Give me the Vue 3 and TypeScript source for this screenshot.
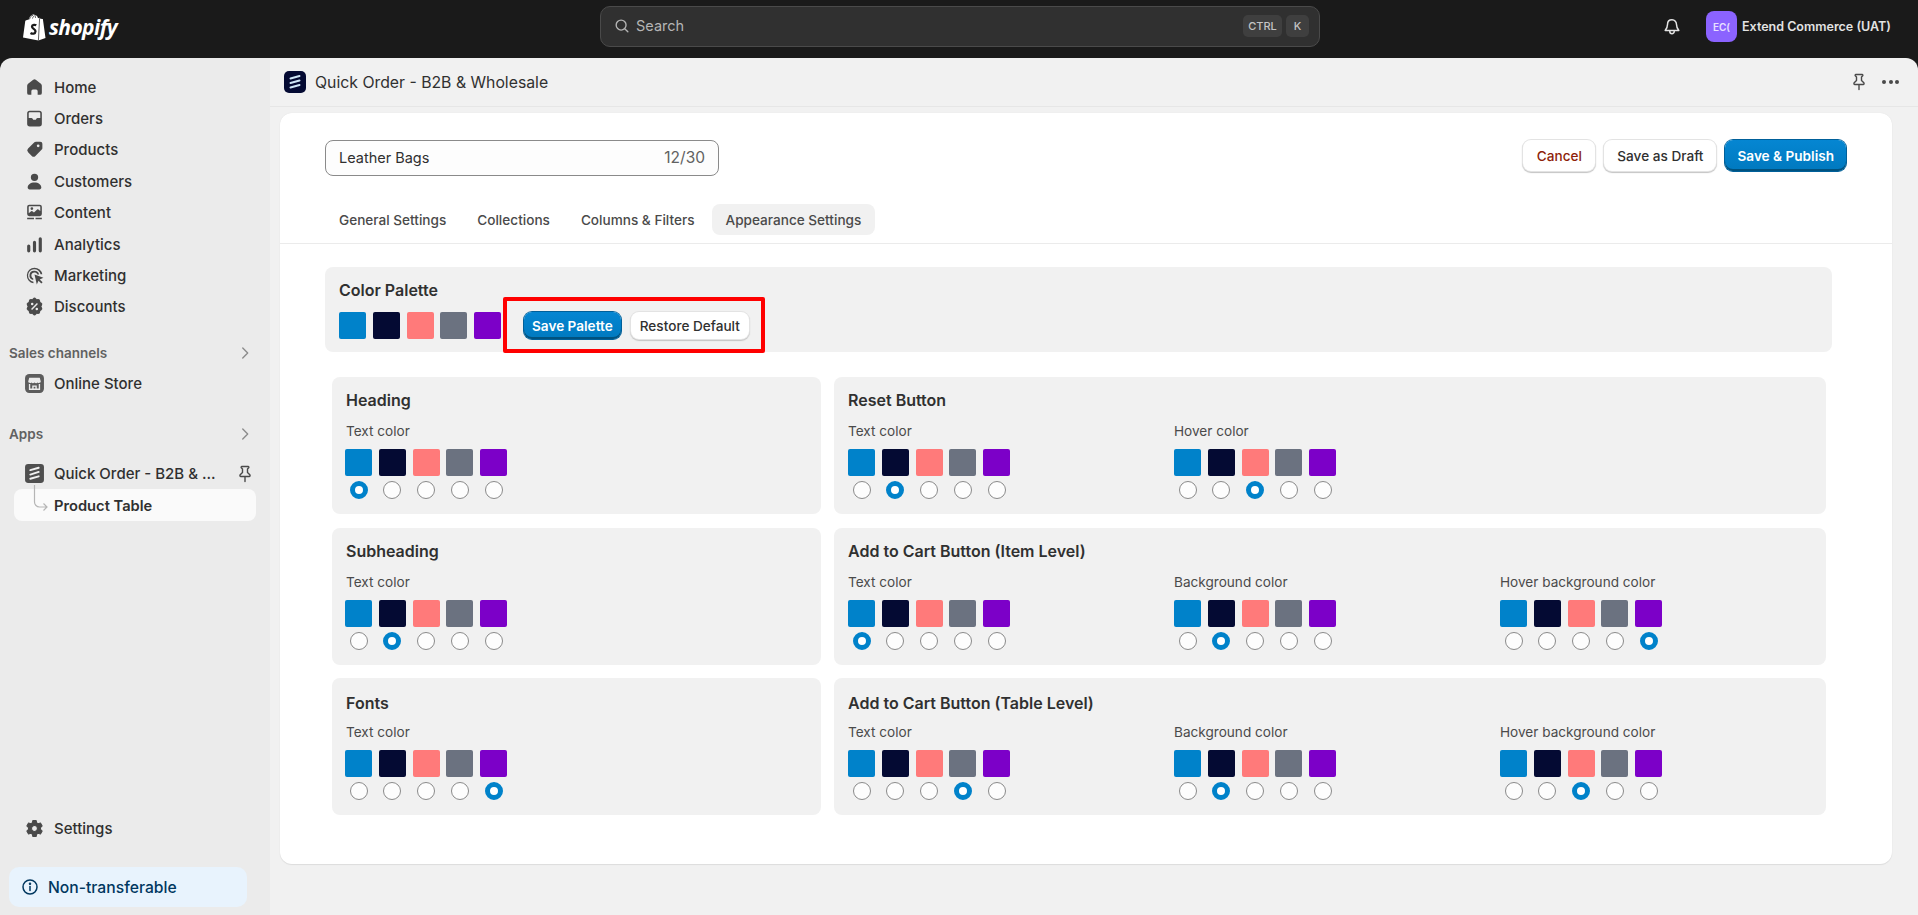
<script setup lang="ts">
interface NavItem { label: string; d: string }
interface Col { label: string; sel: number }
interface Section { title: string; cols: Col[] }

const colors = ['#0082ca', '#040a33', '#ff7a7a', '#6b7280', '#7c00c8']

const nav: NavItem[] = [
  { label: 'Home', d: 'M8.8 2.7a2 2 0 0 1 2.4 0l4.9 3.7A2.4 2.4 0 0 1 17 8.3v6.900a1.800 1.800 0 0 1-1.800 1.800H13v-3.500a1.500 1.500 0 0 0-1.500-1.500h-3A1.500 1.500 0 0 0 7 13.500V17H4.800A1.800 1.800 0 0 1 3 15.200V8.300a2.400 2.400 0 0 1 .9-1.900z' },
  { label: 'Orders', d: 'M5.500 2.500A2.500 2.500 0 0 0 3 5v10a2.500 2.500 0 0 0 2.500 2.500h9A2.500 2.500 0 0 0 17 15V5a2.500 2.500 0 0 0-2.500-2.500zM4.500 5a1 1 0 0 1 1-1h9a1 1 0 0 1 1 1v4.500h-2.600c-.5 0-.9.300-1.100.700l-.3.600c-.1.300-.4.500-.7.500H9.200c-.3 0-.6-.2-.7-.5l-.3-.6c-.2-.4-.6-.7-1.100-.7H4.500z' },
  { label: 'Products', d: 'M11.300 2.500h4.200a2 2 0 0 1 2 2v4.200a2 2 0 0 1-.6 1.400l-6 6a2.500 2.500 0 0 1-3.500 0l-3.500-3.500a2.500 2.500 0 0 1 0-3.500l6-6a2 2 0 0 1 1.400-.6zM13.500 5.200a1.300 1.300 0 1 0 0 2.600 1.300 1.300 0 0 0 0-2.600z' },
  { label: 'Customers', d: 'M10 2.500a3.500 3.500 0 1 1 0 7 3.500 3.500 0 0 1 0-7zM10 11c-3.800 0-6.500 2-6.500 4.700 0 1 .8 1.800 1.800 1.800h9.400c1 0 1.800-.8 1.800-1.800C16.500 13 13.800 11 10 11z' },
  { label: 'Content', d: 'M5 2.500A2 2 0 0 0 3 4.500v7a2 2 0 0 0 2 2h10a2 2 0 0 0 2-2v-7a2 2 0 0 0-2-2zM4.500 4.500A.5.5 0 0 1 5 4h10a.5.5 0 0 1 .5.5v4l-1.800-1.400a1 1 0 0 0-1.200 0L9.500 10 8 8.900a1 1 0 0 0-1.200 0l-2.300 1.800zM7.500 5a1.300 1.300 0 1 0 0 2.600 1.300 1.300 0 0 0 0-2.600zM3 15h6.500v1.500H3zM11 15h6v1.500h-6z' },
  { label: 'Analytics', d: 'M3 11.500a1.500 1.500 0 0 1 3 0V16a1.500 1.500 0 0 1-3 0zM8.500 8a1.500 1.500 0 0 1 3 0v8a1.500 1.500 0 0 1-3 0zM14 4.500a1.500 1.500 0 0 1 3 0V16a1.500 1.500 0 0 1-3 0z' },
  { label: 'Marketing', d: 'M10 2.500a7.500 7.500 0 0 1 7.400 6.300h-1.600A6 6 0 1 0 9 15.900v1.500A7.500 7.500 0 0 1 10 2.500zM10 5.500a4.500 4.500 0 0 1 4.400 3.500h-1.600A3 3 0 1 0 8.800 12.800v1.600A4.500 4.500 0 0 1 10 5.500zM10 9l8.500 3.200-3.500 1.600 2.700 2.700-1.200 1.200-2.700-2.700-1.600 3.500z' },
  { label: 'Discounts', d: 'M8.500 2.300a2 2 0 0 1 3 0l.7.700 1-.1a2 2 0 0 1 2.200 1.800l.1 1 .9.600a2 2 0 0 1 .6 2.900l-.5.800.5.800a2 2 0 0 1-.6 2.900l-.9.600-.1 1a2 2 0 0 1-2.200 1.800l-1-.1-.7.700a2 2 0 0 1-3 0l-.7-.7-1 .1a2 2 0 0 1-2.200-1.800l-.1-1-.9-.6a2 2 0 0 1-.6-2.900l.5-.8-.5-.8a2 2 0 0 1 .6-2.900l.9-.6.100-1a2 2 0 0 1 2.200-1.800l1 .1zM12.300 6.700 6.700 12.300l1 1 5.600-5.600zM7.800 6.400a1.200 1.200 0 1 0 0 2.400 1.200 1.200 0 0 0 0-2.400zM12.200 11.200a1.200 1.200 0 1 0 0 2.400 1.200 1.200 0 0 0 0-2.400z' }
]

const gearPath = 'M8.400 2.500h3.200l.5 2.100 1.500.9 2.100-.7 1.600 2.800-1.600 1.500v1.800l1.600 1.500-1.600 2.800-2.100-.7-1.500.9-.5 2.100H8.400l-.5-2.100-1.500-.9-2.100.7-1.600-2.800 1.600-1.500V9.100L2.700 7.600l1.600-2.800 2.100.7 1.500-.9zM10 7.200a2.800 2.800 0 1 0 0 5.600 2.800 2.800 0 0 0 0-5.600z'

const pinPath = 'M6.800 2.500h6.400c.6 0 .9.700.5 1.200L12.500 5v3.500l2.300 2.300c.6.600.2 1.700-.7 1.700H5.900c-.9 0-1.300-1.100-.7-1.700l2.300-2.300V5L6.300 3.700c-.4-.5-.1-1.200.5-1.200zM10 12.500v5'

const sections: Section[] = [
  { title: 'Heading', cols: [{ label: 'Text color', sel: 0 }] },
  { title: 'Reset Button', cols: [{ label: 'Text color', sel: 1 }, { label: 'Hover color', sel: 2 }] },
  { title: 'Subheading', cols: [{ label: 'Text color', sel: 1 }] },
  { title: 'Add to Cart Button (Item Level)', cols: [{ label: 'Text color', sel: 0 }, { label: 'Background color', sel: 1 }, { label: 'Hover background color', sel: 4 }] },
  { title: 'Fonts', cols: [{ label: 'Text color', sel: 4 }] },
  { title: 'Add to Cart Button (Table Level)', cols: [{ label: 'Text color', sel: 3 }, { label: 'Background color', sel: 1 }, { label: 'Hover background color', sel: 2 }] }
]
</script>

<template>
  <div class="app">
    <header class="topbar">
      <div class="brand">
        <svg class="bag" viewBox="0 0 24 27" width="24" height="27">
          <path fill="#fff" d="M1 23.500 3.300 6.800c.1-.5 3.100-1.200 3.500-1.300C7.400 3 9.300.5 11.700.5c.6 0 1.100.3 1.500.8 1.500 0 2.400 1.300 2.800 2.900l1.600-.5.900 1 2.100.2c.2 0 .3.1.3.3L23.500 24 16.400 26.500z" />
          <path fill="none" stroke="#1a1a1a" stroke-width=".7" d="M17.600 4.200 16.400 26.500M7.500 5.300c.4-2 1.800-4 3.600-4M10.500 4.500c.3-1.300 1-2.400 2-2.700M13.500 3.900c0-1-.1-1.700-.4-2.300" />
          <path fill="none" stroke="#1a1a1a" stroke-width="2.300" d="M14.300 11.300c-1.100-.6-4-.9-4.300 1.200-.3 2.300 3.700 2.500 3.500 5-.2 2.300-2.900 2.600-5 1.400" />
        </svg>
        <span class="wordmark">shopify</span>
      </div>
      <div class="search">
        <svg viewBox="0 0 20 20" width="18" height="18" fill="none" stroke="#b5b5b5" stroke-width="1.500"><circle cx="9" cy="9" r="5.500" /><path d="m13 13 3.500 3.500" stroke-linecap="round" /></svg>
        <span class="search-text">Search</span>
        <span class="kbd ctrl">CTRL</span>
        <span class="kbd">K</span>
      </div>
      <div class="top-right">
        <svg class="bell" viewBox="0 0 20 20" width="20" height="20" fill="none" stroke="#e3e3e3" stroke-width="1.500" stroke-linejoin="round"><path d="M10 2.800c-2.800 0-4.500 2.100-4.500 4.700 0 3-1.200 4.500-2.300 6h13.600c-1.100-1.500-2.300-3-2.300-6 0-2.600-1.700-4.700-4.500-4.700z" /><path d="M7.800 14v.5a2.200 2.200 0 0 0 4.400 0V14" /></svg>
        <span class="avatar">EC(</span>
        <span class="store-name">Extend Commerce (UAT)</span>
      </div>
    </header>

    <div class="shell">
      <aside class="sidebar">
        <nav class="nav">
          <a v-for="item in nav" :key="item.label" class="nav-row">
            <svg class="nav-icon" viewBox="0 0 20 20"><path :d="item.d" fill-rule="evenodd" /></svg>
            <span>{{ item.label }}</span>
          </a>
        </nav>

        <div class="group-head first">
          <span>Sales channels</span>
          <svg viewBox="0 0 20 20" width="18" height="18" fill="none" stroke="#8a8a8a" stroke-width="1.500"><path d="m7.500 4.500 5.500 5.500-5.500 5.500" stroke-linecap="round" stroke-linejoin="round" /></svg>
        </div>
        <a class="nav-row">
          <svg class="nav-icon" viewBox="0 0 20 20">
            <rect x="1" y="1" width="18" height="18" rx="4" fill="#5c5c5c" />
            <path d="M5 4.500h10l1 3.500a1.800 1.800 0 0 1-3 1 2.200 2.200 0 0 1-3 0 2.200 2.200 0 0 1-3 0 1.800 1.800 0 0 1-3-1z" fill="#ebebeb" />
            <path d="M5.300 10.500V15.500h9.400v-5M8.500 15.500v-3h3v3" fill="none" stroke="#ebebeb" stroke-width="1.300" />
          </svg>
          <span>Online Store</span>
        </a>

        <div class="group-head second">
          <span>Apps</span>
          <svg viewBox="0 0 20 20" width="18" height="18" fill="none" stroke="#8a8a8a" stroke-width="1.500"><path d="m7.500 4.500 5.500 5.500-5.500 5.500" stroke-linecap="round" stroke-linejoin="round" /></svg>
        </div>
        <a class="nav-row app-row">
          <svg class="nav-icon" viewBox="0 0 20 20">
            <rect x="1" y="1" width="18" height="18" rx="3" fill="#4f4f4f" />
            <path d="M6 6.800 14 4.500M6 11 14 8.500M6 15l8-2.300" fill="none" stroke="#f1f1f1" stroke-width="1.800" stroke-linecap="round" />
          </svg>
          <span class="app-name">Quick Order - B2B &amp; ...</span>
          <svg class="pin" viewBox="0 0 20 20" width="20" height="20" fill="none" stroke="#4a4a4a" stroke-width="1.400" stroke-linejoin="round" stroke-linecap="round"><path :d="pinPath" /></svg>
        </a>
        <div class="sub-row">
          <svg class="tree" viewBox="0 0 16 28" width="16" height="28" fill="none" stroke="#b5b5b5" stroke-width="1.200"><path d="M1.500 0v17a5 5 0 0 0 5 5h7M10.500 18.500l3.500 3.500-3.500 3.500" /></svg>
          <span>Product Table</span>
        </div>

        <div class="bottom">
          <a class="nav-row">
            <svg class="nav-icon gear" viewBox="0 0 20 20"><path :d="gearPath" fill-rule="evenodd" /></svg>
            <span>Settings</span>
          </a>
          <div class="notice">
            <svg viewBox="0 0 20 20" width="20" height="20" fill="none" stroke="#00375f" stroke-width="1.500"><circle cx="10" cy="10" r="7" /><path d="M10 9.500v4" stroke-linecap="round" /><circle cx="10" cy="6.800" r=".5" fill="#00375f" /></svg>
            <span>Non-transferable</span>
          </div>
        </div>
      </aside>

      <main class="main">
        <div class="app-head">
          <svg class="app-logo" viewBox="0 0 22 22" width="22" height="22">
            <rect width="22" height="22" rx="5" fill="#040a33" />
            <path d="M6.500 7.500 15.500 5M6.500 12 15.500 9.500M6.500 16.500l9-2.500" fill="none" stroke="#cfe6f7" stroke-width="2" stroke-linecap="round" />
          </svg>
          <span class="app-title">Quick Order - B2B &amp; Wholesale</span>
          <svg class="head-pin" viewBox="0 0 20 20" width="20" height="20" fill="none" stroke="#4a4a4a" stroke-width="1.400" stroke-linejoin="round" stroke-linecap="round"><path :d="pinPath" /></svg>
          <span class="dots"><i></i><i></i><i></i></span>
        </div>

        <section class="card">
          <div class="title-row">
            <div class="name-input">
              <span>Leather Bags</span>
              <span class="count">12/30</span>
            </div>
            <div class="actions">
              <button class="btn cancel">Cancel</button>
              <button class="btn">Save as Draft</button>
              <button class="btn primary">Save &amp; Publish</button>
            </div>
          </div>

          <div class="tabs">
            <span class="tab">General Settings</span>
            <span class="tab">Collections</span>
            <span class="tab">Columns &amp; Filters</span>
            <span class="tab active">Appearance Settings</span>
          </div>

          <div class="content">
            <div class="palette">
              <h3 class="sec-title">Color Palette</h3>
              <div class="palette-row">
                <div class="swatches">
                  <span v-for="c in colors" :key="c" class="swatch" :style="{ background: c }"></span>
                </div>
                <div class="palette-btns">
                  <button class="btn primary small">Save Palette</button>
                  <button class="btn small">Restore Default</button>
                  <span class="highlight"></span>
                </div>
              </div>
            </div>

            <div class="grid">
              <div v-for="s in sections" :key="s.title" class="panel">
                <h3 class="sec-title">{{ s.title }}</h3>
                <div class="cols">
                  <div v-for="col in s.cols" :key="col.label" class="col">
                    <div class="col-label">{{ col.label }}</div>
                    <div class="swatches">
                      <div v-for="(c, i) in colors" :key="c" class="pick">
                        <span class="swatch" :style="{ background: c }"></span>
                        <span class="radio" :class="{ on: i === col.sel }"></span>
                      </div>
                    </div>
                  </div>
                </div>
              </div>
            </div>
          </div>
        </section>
      </main>
    </div>
  </div>
</template>

<style>
html, body { margin: 0; background: #1a1a1a; }
</style>

<style scoped>
.app {
  height: 915px;
  width: 1918px;
  overflow: hidden;
  display: flex;
  flex-direction: column;
  font-family: Inter, "Liberation Sans", sans-serif;
  color: #303030;
  font-size: 13.600px;
  background: #1a1a1a;
}
.topbar {
  height: 58px;
  flex: none;
  display: grid;
  grid-template-columns: 600px 720px 1fr;
  align-items: center;
}
.brand { display: flex; align-items: center; gap: 3px; padding-left: 22px; margin-top: -3px; }
.bag { flex: none; }
.wordmark {
  font-family: "Open Sans", sans-serif;
  font-style: italic;
  font-weight: 700;
  font-size: 21px;
  letter-spacing: -0.6px;
  color: #fff;
  line-height: 27px;
}
.search {
  height: 41px;
  box-sizing: border-box;
  margin-top: -6px;
  display: flex;
  align-items: center;
  background: #303030;
  border: 1px solid #4a4a4a;
  border-radius: 10px;
  padding: 0 10px 0 12px;
  color: #b5b5b5;
  font-size: 14.500px;
}
.search-text { margin-left: 5px; flex: 1; margin-top: -2px; }
.kbd {
  height: 22px;
  min-width: 23px;
  box-sizing: border-box;
  display: flex;
  align-items: center;
  justify-content: center;
  background: #3f3f3f;
  border-radius: 5px;
  font-size: 11px;
  font-weight: 500;
  color: #c4c4c4;
}
.ctrl { width: 39px; margin-right: 4px; }
.top-right { display: flex; align-items: center; padding-left: 342px; margin-top: -5px; }
.bell { flex: none; }
.avatar {
  margin-left: 24px;
  width: 31px;
  height: 31px;
  flex: none;
  border-radius: 8px;
  background: #8b63ff;
  color: #e8e0ff;
  font-size: 10px;
  font-weight: 600;
  display: flex;
  align-items: center;
  justify-content: center;
}
.store-name {
  margin-left: 5px;
  color: #e3e3e3;
  font-size: 12.500px;
  font-weight: 600;
  white-space: nowrap;
}
.shell { flex: 1; display: flex; min-height: 0; }
.sidebar {
  width: 270px;
  flex: none;
  box-sizing: border-box;
  background: #ebebeb;
  border-top-left-radius: 12px;
  padding-top: 13.500px;
  display: flex;
  flex-direction: column;
}
.nav-row {
  height: 31.400px;
  display: flex;
  align-items: center;
  padding-left: 24px;
  gap: 9px;
  color: #303030;
  font-size: 15px;
  font-weight: 450;
}
.nav-icon { width: 21px; height: 21px; fill: #4a4a4a; flex: none; }
.gear { stroke: #4a4a4a; stroke-width: 1; stroke-linejoin: round; }
.group-head {
  height: 20px;
  display: flex;
  align-items: center;
  justify-content: space-between;
  padding: 0 16px 0 9px;
  color: #616161;
  font-size: 13.500px;
  font-weight: 600;
}
.group-head.first { margin-top: 20px; margin-bottom: 5px; }
.group-head.second { margin-top: 25px; margin-bottom: 14px; }
.app-name { flex: 1; }
.pin { margin-right: 15px; }
.sub-row {
  position: relative;
  height: 32px;
  margin: 0 14px;
  box-sizing: border-box;
  background: #fafafa;
  border-radius: 8px;
  padding: 1px 0 0 40px;
  display: flex;
  align-items: center;
  font-size: 14.700px;
  font-weight: 600;
  color: #303030;
}
.tree { position: absolute; left: 19px; top: -4px; }
.bottom { margin-top: auto; padding-bottom: 8px; }
.notice {
  margin: 23px 23px 0 9px;
  height: 40px;
  border-radius: 10px;
  background: #e8f3fd;
  display: flex;
  align-items: center;
  padding-left: 11px;
  gap: 8px;
  color: #00375f;
  font-size: 15.700px;
  font-weight: 500;
}
.main {
  flex: 1;
  min-width: 0;
  background: #f1f1f1;
  border-top-right-radius: 12px;
}
.app-head {
  height: 49px;
  box-sizing: border-box;
  border-bottom: 1px solid #e6e6e6;
  display: flex;
  align-items: center;
  padding: 0 19px 0 14px;
}
.app-logo { flex: none; margin-right: 9px; }
.app-title { flex: 1; font-size: 15.800px; color: #303030; }
.dots { display: flex; gap: 2.500px; margin-left: 13px; }
.dots i { width: 4px; height: 4px; border-radius: 50%; background: #4a4a4a; display: block; }
.card {
  margin: 6px 26px 0 10px;
  height: 751px;
  box-sizing: border-box;
  background: #fff;
  border-radius: 12px;
  box-shadow: 0 1px 1px #dcdcdc, 0 0 1px #dcdcdc;
  padding-top: 27px;
}
.title-row {
  display: flex;
  justify-content: space-between;
  align-items: flex-start;
  padding: 0 46px 0 45px;
}
.name-input {
  width: 394px;
  height: 36px;
  box-sizing: border-box;
  background: #fdfdfd;
  border: 1px solid #8a8a8a;
  border-radius: 8px;
  display: flex;
  align-items: center;
  justify-content: space-between;
  padding: 0 13px 2px;
  font-size: 14.500px;
}
.count { color: #616161; font-size: 15.500px; }
.actions { display: flex; gap: 9px; }
.btn {
  font-family: inherit;
  height: 31px;
  padding: 0 13px;
  border: none;
  background: #fff;
  border-radius: 8px;
  color: #303030;
  font-size: 13.600px;
  font-weight: 500;
  box-shadow: 0 0 0 1px #e3e3e3, 0 1px 1px 1px #c4c4c4;
}
.cancel { color: #8e1f0b; width: 72px; padding: 0; }
.primary {
  color: #fff;
  font-weight: 600;
  padding: 0 12px;
  background: linear-gradient(#0586d2, #0079bf);
  box-shadow: inset 0 -2px 0 #00527f, 0 0 0 1px #00609a;
}
.tabs {
  margin-top: 28px;
  padding: 0 45px 8px;
  display: flex;
  gap: 3px;
  border-bottom: 1px solid #ebebeb;
}
.tab {
  height: 31px;
  display: flex;
  align-items: center;
  padding: 0 14px;
  border-radius: 8px;
  font-weight: 500;
  color: #4a4a4a;
}
.tab.active { background: #f1f1f1; }
.content { padding: 23px 60px 0 45px; }
.palette {
  background: #f1f1f1;
  border-radius: 8px;
  height: 85px;
  box-sizing: border-box;
  padding: 13px 14px;
}
.sec-title {
  margin: 0;
  font-size: 16px;
  line-height: 20px;
  font-weight: 600;
  color: #303030;
}
.palette-row { display: flex; margin-top: 12px; }
.swatches { display: flex; gap: 6.750px; }
.swatch { display: block; width: 27px; height: 27px; border-radius: 2px; }
.palette-btns {
  position: relative;
  display: flex;
  gap: 10px;
  margin-left: 23px;
}
.small { height: 27px; padding: 0 9px; }
.primary.small { padding: 0 8px; }
.highlight {
  position: absolute;
  left: -21px;
  right: -16px;
  top: -15px;
  bottom: -14px;
  border: 4px solid #f00;
  border-radius: 2px;
  pointer-events: none;
}
.grid {
  margin: 25px 6px 0 7px;
  display: grid;
  grid-template-columns: 489px minmax(0, 1fr);
  gap: 13.500px 13px;
}
.panel {
  height: 137px;
  box-sizing: border-box;
  background: #f1f1f1;
  border-radius: 8px;
  padding: 13px 14px;
}
.panel:nth-child(n+5) { padding-top: 15px; }
.panel:nth-child(n+5) .cols { margin-top: 9px; }
.panel:nth-child(odd) .swatches { margin-left: -1px; }
.cols { display: flex; margin-top: 11px; }
.col { width: 326px; flex: none; }
.col-label { line-height: 20px; color: #4a4a4a; margin-bottom: 8px; }
.pick { display: flex; flex-direction: column; align-items: center; gap: 5px; width: 27px; }
.radio {
  width: 18px;
  height: 18px;
  box-sizing: border-box;
  border-radius: 50%;
  background: #fdfdfd;
  border: 1px solid #8a8a8a;
  display: block;
}
.radio.on { border: 5px solid #0082ca; background: #fff; }
</style>
